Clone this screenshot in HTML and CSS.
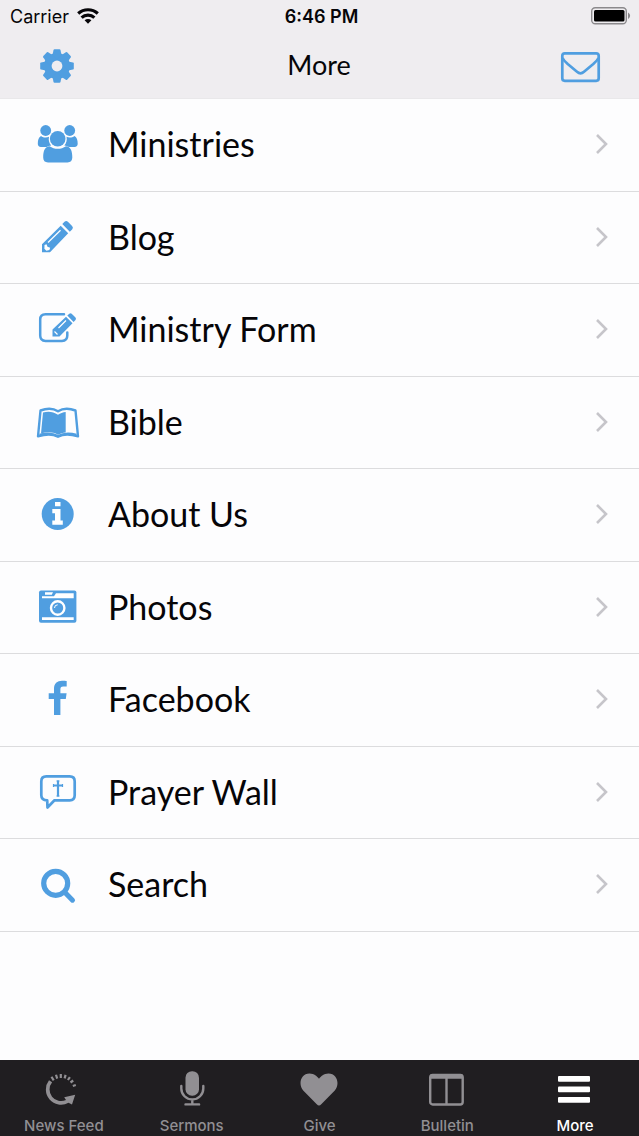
FILE: index.html
```
<!DOCTYPE html>
<html lang="en">
<head>
<meta charset="utf-8">
<meta name="viewport" content="width=device-width, initial-scale=1">
<title>More</title>
<link rel="stylesheet" href="styles.css">
</head>
<body class="app">
<svg class="defs" aria-hidden="true">
  <symbol id="chevron" viewBox="0 0 14 22"><path d="M2 2l9 9-9 9" fill="none" stroke="currentColor" stroke-width="2.6"/></symbol>
</svg>
<header class="top">
  <div class="status">
    <div class="carrier">Carrier
      <svg width="22" height="16" viewBox="0 0 22 16" fill="none" stroke="currentColor" stroke-width="3.2" aria-hidden="true"><path d="M1.2 5.5c5.6-5 14-5 19.600 0M4.600 9.600c3.600-3.300 9.200-3.300 12.800 0"/><path d="M11 15.800l-3.400-3.500c1.900-1.700 4.900-1.700 6.800 0z" fill="currentColor" stroke="none"/></svg>
    </div>
    <time class="clock">6:46 PM</time>
    <svg class="battery" width="40" height="18" viewBox="0 0 40 18" role="img" aria-label="Battery full"><rect x=".7" y=".7" width="34.600" height="16" rx="3.500" fill="none" stroke="#8b898c" stroke-width="1.400"/><rect x="3" y="3" width="30.500" height="11.500" rx="1.500"/><path d="M37 5.500c2.800 1.800 2.800 4.600 0 6.400z" fill="#8b898c"/></svg>
  </div>
  <div class="nav">
    <button class="nav-btn" aria-label="Settings">
      <svg width="48" height="48" viewBox="-24 -24 48 48" fill="currentColor" aria-hidden="true"><defs><mask id="gm"><rect x="-24" y="-24" width="48" height="48" fill="#fff"/><circle r="5.400" fill="#000"/></mask></defs><g mask="url(#gm)"><circle r="13"/><path id="tooth" d="M-4.500-11l1-5q.2-.8 1-.8h5q.8 0 1 .8l1 5v22l-1 5q-.2.800-1 .800h-5q-.8 0-1-.800l-1-5z"/><use href="#tooth" transform="rotate(45)"/><use href="#tooth" transform="rotate(90)"/><use href="#tooth" transform="rotate(135)"/></g></svg>
    </button>
    <h1 class="title">More</h1>
    <button class="nav-btn" aria-label="Messages">
      <svg width="48" height="48" viewBox="0 0 48 48" fill="none" stroke="currentColor" stroke-width="2.700" stroke-linejoin="round" aria-hidden="true"><rect x="5.300" y="11.300" width="36.400" height="27.500" rx="2.500"/><path d="M5.500 16c1.500 3 3.500 4.500 5.500 6.300l9 7.500q3.500 3 7 0l9-7.500c2-1.800 4-3.300 5.500-6.300"/></svg>
    </button>
  </div>
</header>
<main class="content">
  <ul class="menu">
    <li class="item"><a class="link" href="#ministries"><svg class="icon" viewBox="0 0 48 48" aria-hidden="true"><circle cx="11.700" cy="10.500" r="5.400"/><circle cx="35.700" cy="10.500" r="5.400"/><path d="M7 16c2.500 2 5.700 2 8 .8-.8 3.500.2 6.500 2.200 8.800-2 .2-3.300.8-4.600 1.400H7c-2.200 0-3.200-1.200-3.200-3.200 0-3.600.8-6.800 3.200-7.800zM40.500 16c-2.500 2-5.700 2-8 .8.8 3.500-.2 6.500-2.200 8.800 2 .2 3.300.8 4.600 1.400h5.600c2.200 0 3.200-1.200 3.200-3.200 0-3.600-.8-6.800-3.200-7.800z"/><circle cx="23.700" cy="18.700" r="7.800"/><path d="M15.500 26.300c5 3.400 11.500 3.400 16.500 0 4.600.5 6.300 4.500 6.300 11.200 0 3.200-1.700 4.900-4.800 4.900H14c-3.200 0-4.800-1.700-4.800-4.900 0-6.700 1.700-10.700 6.300-11.200z"/></svg><span class="label">Ministries</span><svg class="chevron" aria-hidden="true"><use href="#chevron"/></svg></a></li>
    <li class="item"><a class="link" href="#blog"><svg class="icon" viewBox="0 0 48 48" aria-hidden="true"><path d="M8 39.300v-8L26.700 12.700l7.500 7.500L16 39.300zM28.300 11l2.200-2.200q1.700-1.600 3.400 0l4.200 4.200q1.700 1.700 0 3.400l-2.300 2.300z"/><path d="M14 29.500L26.500 17.300" stroke="#fff" stroke-width="1.200"/><path d="M10.500 32l2-.8 1 2.500 2.700 1-.8 2.300-3 .8-2-2z" fill="#fff"/></svg><span class="label">Blog</span><svg class="chevron" aria-hidden="true"><use href="#chevron"/></svg></a></li>
    <li class="item"><a class="link" href="#form"><svg class="icon" viewBox="0 0 48 48" aria-hidden="true"><path d="M30 9.300H11.500q-5.300 0-5.300 5.300v16q0 5.300 5.300 5.300H28q5.300 0 5.300-5.300v-3" fill="none" stroke="currentColor" stroke-width="2.500" stroke-linecap="round"/><path d="M18.500 31.500v-7L32 11.700l6.500 6.500-13 13.300zM33.300 10.500l2-1.800q1.200-1 2.400 0l3.800 3.900q1 1.200 0 2.300l-1.900 2z"/><path d="M24.500 23L32 15.500M20.500 26.500l3 3" stroke="#fff" stroke-width="1.200"/></svg><span class="label">Ministry Form</span><svg class="chevron" aria-hidden="true"><use href="#chevron"/></svg></a></li>
    <li class="item"><a class="link" href="#bible"><svg class="icon" viewBox="0 0 48 48" aria-hidden="true"><path d="M6.500 12.500c6-2.200 12.500-2.400 17.500.8 5-3.200 11.500-3 17.500-.8l2.500 25.800c-6.500-1.800-14-2.800-20 .5-6-3.300-13.500-2.300-20-.5z" fill="none" stroke="currentColor" stroke-width="2.400" stroke-linejoin="round"/><path d="M9 14.500c5-1.500 10-1.200 15 2.200 2.300-1.600 5-2.500 7.700-2.800v20.500c-2.700.2-5.400.9-7.700 2.300-5.500-3.200-11.500-2.900-17-1.300z"/><path d="M5.500 36.800c7-2 13-1.800 18.500 1.100 5.500-2.900 11.500-3.100 18.500-1.100" fill="none" stroke="currentColor" stroke-width="2"/></svg><span class="label">Bible</span><svg class="chevron" aria-hidden="true"><use href="#chevron"/></svg></a></li>
    <li class="item"><a class="link" href="#about"><svg class="icon" viewBox="0 0 48 48" aria-hidden="true"><circle cx="23.700" cy="24" r="16"/><path d="M21 12h5.500v4.300H21zM18.300 19h8.200v11.500h2.300v4.300H18.300v-4.300H21v-7.200h-2.700z" fill="#fff"/></svg><span class="label">About Us</span><svg class="chevron" aria-hidden="true"><use href="#chevron"/></svg></a></li>
    <li class="item"><a class="link" href="#photos"><svg class="icon" viewBox="0 0 48 48" aria-hidden="true"><rect x="5" y="7.500" width="37.400" height="32.200" rx="2"/><path d="M8 13.300h12l2-3h17.700v4.900H8zM11 9.300h8l-1.200 2.500H11zM8 34.300h31.700v2.600H8z" fill="#fff"/><circle cx="23.700" cy="25" r="8.800"/><circle cx="23.700" cy="25" r="6.700" fill="none" stroke="#fff" stroke-width="2.400"/><path d="M20.500 25a3.200 3.200 0 0 1 3.200-3.200" fill="none" stroke="#fff" stroke-width="1"/></svg><span class="label">Photos</span><svg class="chevron" aria-hidden="true"><use href="#chevron"/></svg></a></li>
    <li class="item"><a class="link" href="#facebook"><svg class="icon" viewBox="0 0 48 48" aria-hidden="true"><path d="M32.700 6v5.500h-3.400c-2.400 0-2.900 1.100-2.900 2.900v3.900h6.200l-.8 5.600h-5.400V40H20V23.900h-5.300v-5.600H20v-4.600c0-5.200 3.200-8 8-8 2.200 0 4 .1 4.700.3z"/></svg><span class="label">Facebook</span><svg class="chevron" aria-hidden="true"><use href="#chevron"/></svg></a></li>
    <li class="item"><a class="link" href="#prayer"><svg class="icon" viewBox="0 0 48 48" aria-hidden="true"><path d="M12.300 8.400h23.400q5 0 5 5v13.900q0 5-5 5H20.500l-7 7.200-.3-7.200q-5.900 0-5.900-5V13.400q0-5 5-5z" fill="none" stroke="currentColor" stroke-width="2.700" stroke-linejoin="round"/><path d="M24 12.500v16M19 17.500h10" stroke="currentColor" stroke-width="2.200"/><path d="M22.500 13h3M22.500 28h3M19.500 16v3M28.500 16v3" stroke="currentColor" stroke-width="1.200"/></svg><span class="label">Prayer Wall</span><svg class="chevron" aria-hidden="true"><use href="#chevron"/></svg></a></li>
    <li class="item"><a class="link" href="#search"><svg class="icon" viewBox="0 0 48 48" aria-hidden="true"><circle cx="21.700" cy="23.300" r="12" fill="none" stroke="currentColor" stroke-width="5.200"/><path d="M31 32.500l7.500 7.700" stroke="currentColor" stroke-width="5" stroke-linecap="round"/></svg><span class="label">Search</span><svg class="chevron" aria-hidden="true"><use href="#chevron"/></svg></a></li>
  </ul>
</main>
<nav class="tabs" aria-label="Main">
  <a class="tab" href="#news"><svg class="tab-icon" viewBox="0 0 40 40" fill="none" stroke="currentColor" aria-hidden="true"><path d="M5 10.200l3.100 2.100A11.500 11.500 0 0 0 22 29.900l-1.800-2.600 11-2.500-3.200 9.700-3.500-1.800A15.200 15.200 0 0 1 5 10.200z" fill="currentColor" stroke="none"/><path d="M7.500 6.800l2.200 3.600M12 4.700l1.200 3.900M16.800 4.100v3.800M21.600 4.900l-1 3.500M25.900 7.100l-2 2.900M29.200 10.500l-2.700 2M31.800 15l-3 1" stroke-width="2.200"/></svg><span class="tab-label">News Feed</span></a>
  <a class="tab" href="#sermons"><svg class="tab-icon" viewBox="0 0 40 40" fill="none" stroke="currentColor" aria-hidden="true"><rect x="13.500" y="1.200" width="13.500" height="24.500" rx="6.500" fill="currentColor" stroke="none"/><path d="M9.300 16v2.500a11 11 0 0 0 22 0V16M20.300 29.500V34M13.500 34.400h13.600" stroke-width="2.400" stroke-linecap="round"/></svg><span class="tab-label">Sermons</span></a>
  <a class="tab" href="#give"><svg class="tab-icon" viewBox="0 0 40 40" fill="currentColor" aria-hidden="true"><path d="M20 35.500Q19 35.500 17.500 34L4.200 20.500C-1 14.500 1.500 3.500 10.500 3.500c4.800 0 7.500 2.800 9.500 5.300 2-2.500 4.700-5.300 9.500-5.300 9 0 11.500 11 6.300 17L22.500 34Q21 35.500 20 35.500z"/></svg><span class="tab-label">Give</span></a>
  <a class="tab" href="#bulletin"><svg class="tab-icon" viewBox="0 0 40 40" fill="none" stroke="currentColor" aria-hidden="true"><rect x="3.200" y="5" width="32.500" height="29.500" rx="2.500" stroke-width="2.400"/><path d="M3.500 6.500h32" stroke-width="4.500"/><path d="M19.500 8v26.500" stroke-width="2.400"/></svg><span class="tab-label">Bulletin</span></a>
  <a class="tab active" href="#more" aria-current="page"><svg class="tab-icon" viewBox="0 0 40 40" fill="currentColor" aria-hidden="true"><rect x="3" y="6" width="32" height="5.800" rx="1"/><rect x="3" y="16.500" width="32" height="5.800" rx="1"/><rect x="3" y="27" width="32" height="5.800" rx="1"/></svg><span class="tab-label">More</span></a>
</nav>
</body>
</html>
```
FILE: styles.css
```
* { box-sizing: border-box; }
.app {
  margin: 0;
  min-height: 100vh;
  display: flex;
  flex-direction: column;
  background: #fdfdfe;
  color: #060508;
  font-family: Inter, "Liberation Sans", sans-serif;
}
.defs { display: none; }
.top { background: #efedf0; border-bottom: 1px solid #e9e8ea; padding-bottom: 2px; }
.status {
  display: grid;
  grid-template-columns: 1fr auto 1fr;
  align-items: center;
  height: 32px;
  padding: 0 8px 0 10px;
  font-size: 18px;
}
.carrier { display: flex; align-items: center; gap: 8px; }
.clock { font-weight: 600; padding-left: 2px; }
.battery { justify-self: end; }
.nav {
  display: flex;
  align-items: center;
  justify-content: space-between;
  height: 64px;
  padding: 3px 34px 0 33px;
}
.nav-btn {
  display: flex;
  padding: 0;
  border: 0;
  background: none;
  color: #509ee0;
  cursor: pointer;
}
.title { margin: 0; padding-bottom: 2px; font: 400 27px/32px Lato, sans-serif; }
.content { flex: 1; }
.menu { margin: 0; padding: 0; list-style: none; }
.item { height: 93px; border-bottom: 1px solid #dcdcde; }
.item:nth-child(even) { height: 92px; }
.link {
  display: flex;
  align-items: center;
  height: 100%;
  padding: 0 30px 2px 34px;
  color: inherit;
  text-decoration: none;
}
.icon { width: 48px; height: 48px; margin-right: 26px; color: #509ee0; fill: currentColor; }
.label { flex: 1; font: 400 34px/44px Lato, sans-serif; }
.chevron { width: 14px; height: 22px; color: #c6c5ca; }
.tabs { display: flex; height: 76px; background: #201e21; }
.tab {
  flex: 1;
  display: flex;
  flex-direction: column;
  align-items: center;
  gap: 7px;
  padding-top: 10px;
  color: #918f93;
  text-decoration: none;
}
.active { color: #fff; }
.tab-icon { width: 40px; height: 40px; }
.tab-label { font-size: 15px; font-weight: 500; line-height: 18px; }
```
